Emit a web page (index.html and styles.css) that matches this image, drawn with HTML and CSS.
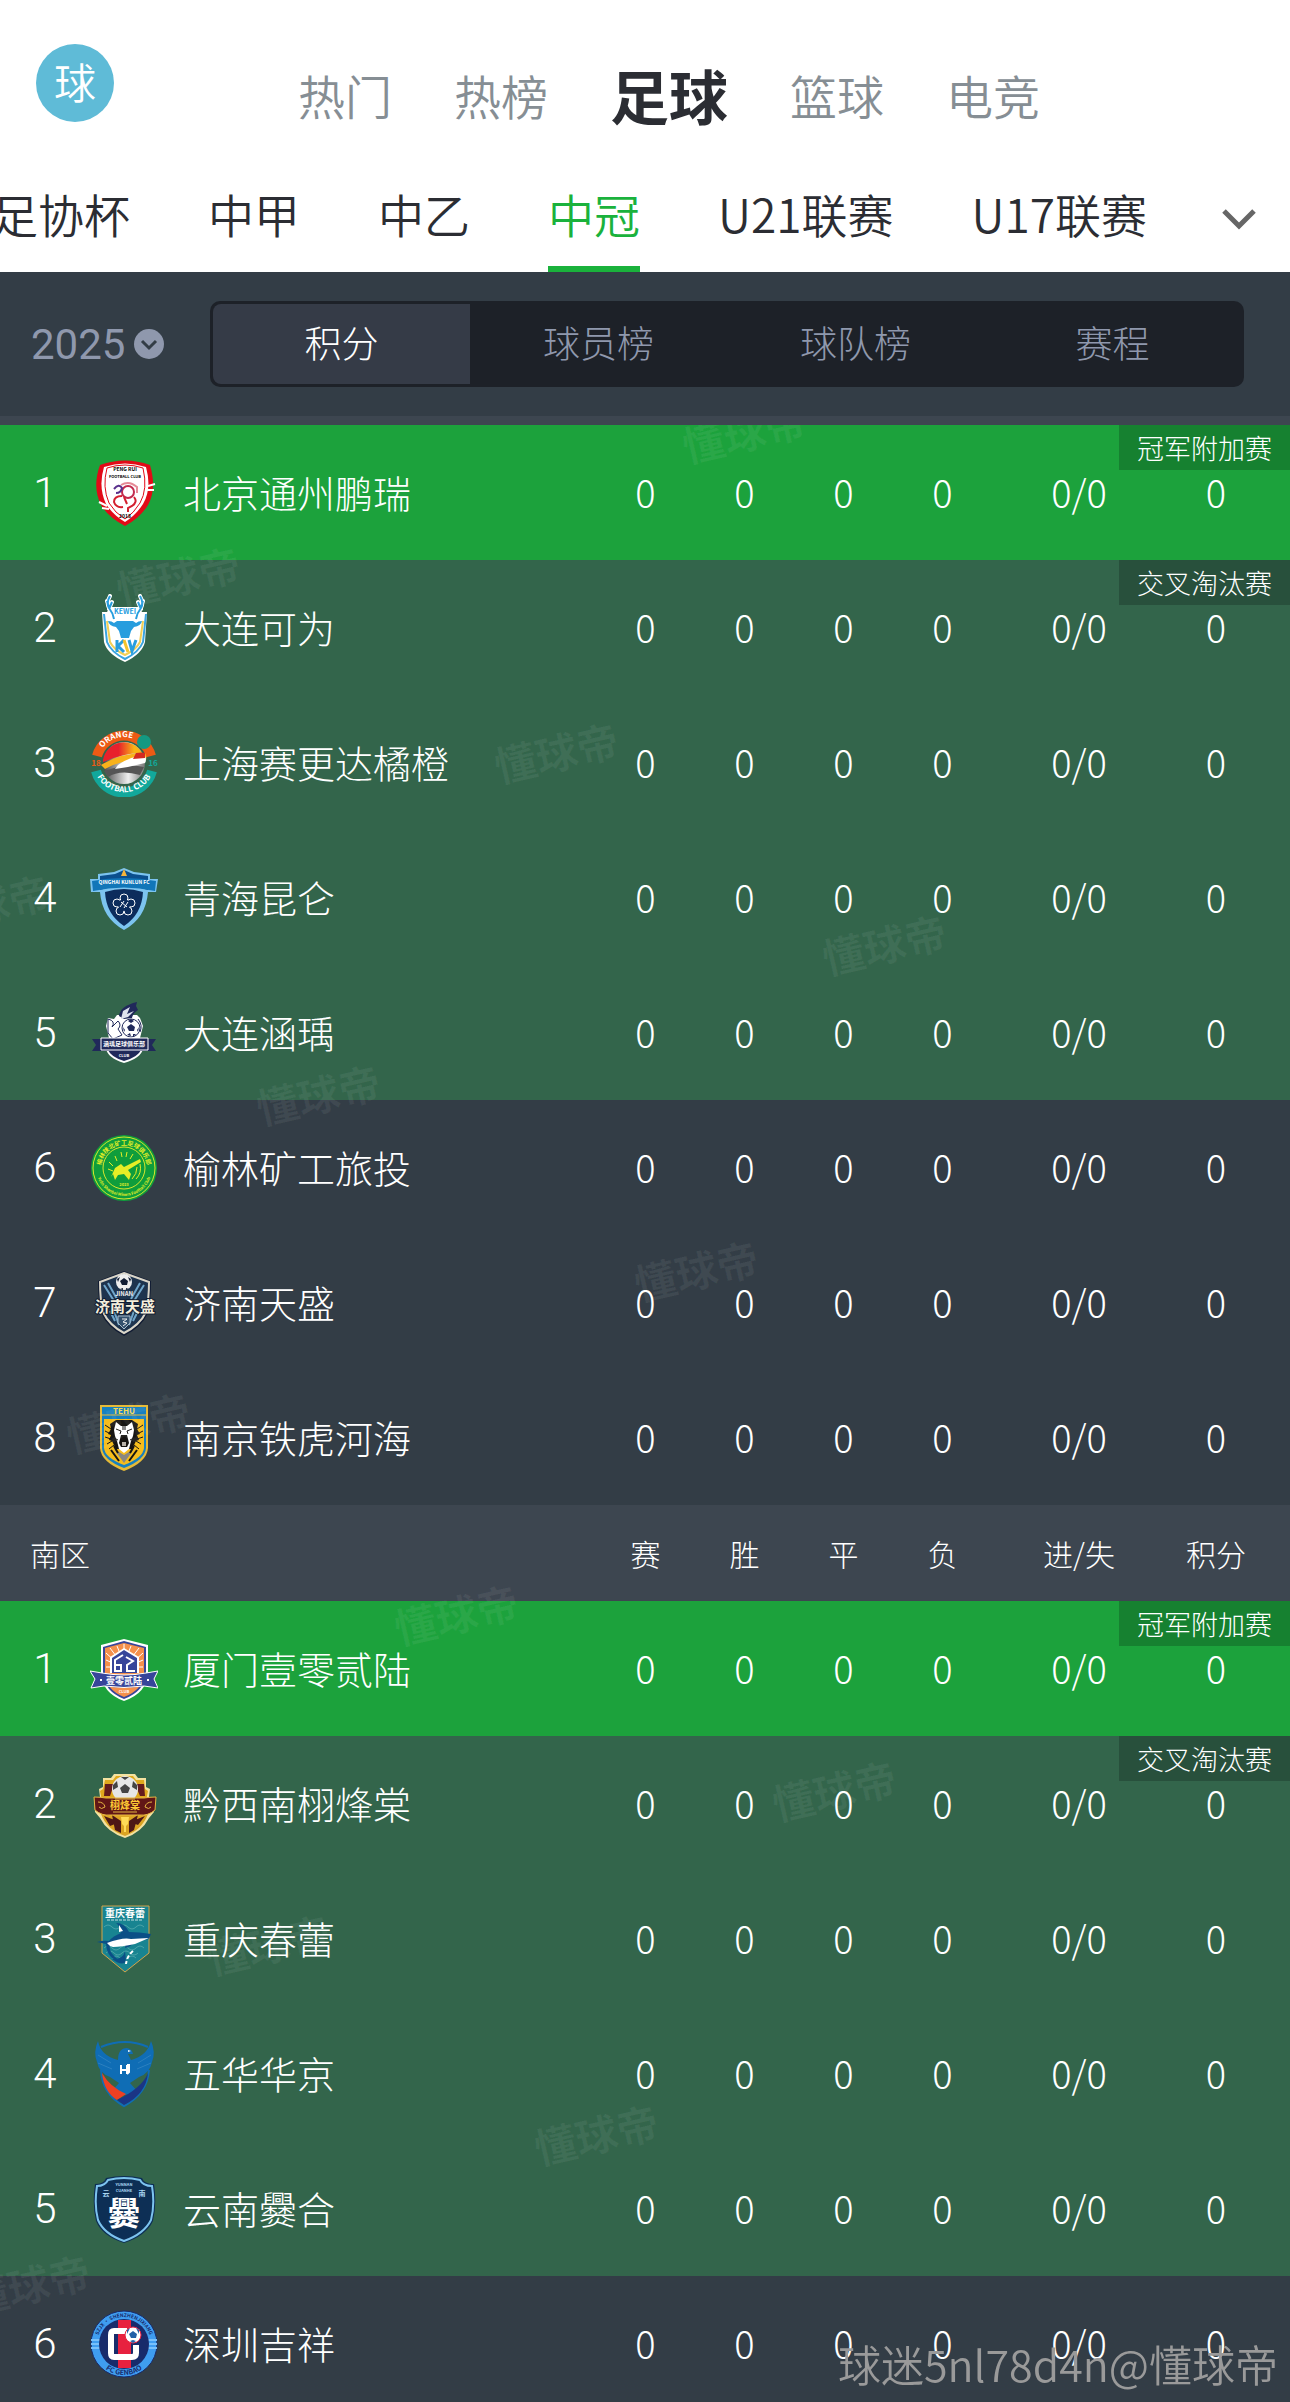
FILE: index.html
```html
<!DOCTYPE html>
<html lang="zh-CN">
<head>
    <meta charset="UTF-8">
    <meta name="viewport" content="width=device-width, initial-scale=1.0">
    <title>中冠积分榜</title>
    <link rel="stylesheet" href="styles.css">
</head>
<body>

<header class="top-bar">
    <a href="#" class="avatar">球</a>
    <nav class="channels">
        <a href="#">热门</a>
        <a href="#">热榜</a>
        <a href="#" class="active">足球</a>
        <a href="#">篮球</a>
        <a href="#">电竞</a>
    </nav>
</header>

<div class="league-bar">
    <nav class="leagues">
        <a href="#">足协杯</a>
        <a href="#">中甲</a>
        <a href="#">中乙</a>
        <a href="#" class="active">中冠</a>
        <a href="#">U21联赛</a>
        <a href="#">U17联赛</a>
    </nav>
    <button class="more" type="button" aria-label="更多">
        <svg width="36" height="24" viewBox="0 0 36 24"><path d="M3 4l15 15L33 4" fill="none" stroke="#666" stroke-width="5"/></svg>
    </button>
</div>

<div class="filter-bar">
    <button class="season" type="button">
        2025
        <svg width="30" height="30" viewBox="0 0 30 30"><circle cx="15" cy="15" r="15" fill="#8f98ad"/><path d="M8 12l7 7 7-7" fill="none" stroke="#333d46" stroke-width="3"/></svg>
    </button>
    <div class="segments">
        <button type="button" class="active">积分</button>
        <button type="button">球员榜</button>
        <button type="button">球队榜</button>
        <button type="button">赛程</button>
    </div>
</div>

<main class="list">
    <table>
        <colgroup>
            <col class="c-rank"><col class="c-crest"><col><col class="c-num"><col class="c-num"><col class="c-num"><col class="c-num"><col class="c-goals"><col class="c-points">
        </colgroup>
        <tbody>
            <tr class="zone-champion">
                <td class="rank">1</td>
                <td class="crest">
                    <svg viewBox="0 0 68 68">
                        <path d="M10 6Q35-3 60 6Q67 30 58 46Q50 59 35 67Q18 58 11 46Q2 28 10 6z" fill="#e20a17"/>
                        <path d="M14 8Q35 1 56 8Q62 30 53 45Q46 56 35 63Q23 56 16 45Q8 28 14 8z" fill="#fff"/>
                        <path d="M17 9Q35 3 53 9Q58 30 50 44Q44 54 35 60Q25 54 19 44Q12 28 17 9z" fill="#fff" stroke="#e20a17" stroke-width="1"/>
                        <path d="M58 27l7-2M57 31l7 0M9 43l8 4M12 49l7 1" stroke="#fff" stroke-width="2"/>
                        <text x="35" y="12" class="t5 heavy">PENG RUI</text>
                        <text x="35" y="19" class="t4 heavy">FOOTBALL CLUB</text>
                        <g fill="none" stroke-width="2">
                            <circle cx="38" cy="33" r="6" stroke="#c22b4e"/>
                            <path d="M32 37q-8 0-8 6 2 6 9 5M34 38l3 7M44 38q4 5-2 9l-4 2v4" stroke="#d31f2e"/>
                            <path d="M24 30q5-6 8-1-1 5-6 5" stroke="#59308c"/>
                            <path d="M31 26q8-5 16 2v6" stroke="#e58a96"/>
                        </g>
                        <text x="35" y="59" class="t5 heavy">2018</text>
                    </svg>
                </td>
                <td class="name">北京通州鹏瑞</td>
                <td>0</td><td>0</td><td>0</td><td>0</td><td>0/0</td>
                <td class="points"><span class="tag">冠军附加赛</span>0</td>
            </tr>
            <tr class="zone-knockout">
                <td class="rank">2</td>
                <td class="crest">
                    <svg viewBox="0 0 68 68">
                        <path d="M12 18h5l3-5h29l3 5h5l-2 30Q52 60 35 68Q17 60 14 48z" fill="#fff"/>
                        <path d="M14 20l3 28Q21 58 35 65Q49 58 53 48l3-28" fill="none" stroke="#3aa4df" stroke-width="2"/>
                        <path d="M17 27l3 21Q24 56 35 61Q46 56 50 48l3-21" fill="none" stroke="#f1cf55" stroke-width="2"/>
                        <path d="M20 2q-4 7-1 12 4 5 5 11M50 2q4 7 1 12-4 5-5 11M17 7l2 6M53 7l-2 6M22 8l-3 7M48 8l3 7" fill="none" stroke="#fff" stroke-width="4" stroke-linecap="round"/>
                        <path d="M20 2q-4 7-1 12 4 5 5 11M50 2q4 7 1 12-4 5-5 11M17 7l2 6M53 7l-2 6M22 8l-3 7M48 8l3 7" fill="none" stroke="#279dde" stroke-width="2"/>
                        <text x="35" y="20" class="t7 heavy" fill="#279dde">KEWEI</text>
                        <path d="M18 27q4 0 6 2l3-2h16l3 2q2-2 6-2-1 5-8 6l-3 4-2 7h-8l-2-7-3-4q-7-1-8-6z" fill="#279dde"/>
                        <path d="M27 46v12M34 46l-6 6 6 6" fill="none" stroke="#279dde" stroke-width="3"/>
                        <path d="M34 46l4 12" stroke="#f2c32e" stroke-width="3"/>
                        <path d="M39 46l3 11 4-11" fill="none" stroke="#279dde" stroke-width="3"/>
                    </svg>
                </td>
                <td class="name">大连可为</td>
                <td>0</td><td>0</td><td>0</td><td>0</td><td>0/0</td>
                <td class="points"><span class="tag">交叉淘汰赛</span>0</td>
            </tr>
            <tr class="zone-knockout">
                <td class="rank">3</td>
                <td class="crest">
                    <svg viewBox="0 0 68 68">
                        <defs>
                            <linearGradient id="sun"><stop offset="0.4" stop-color="#e8202c"/><stop offset="0.8" stop-color="#f9b515"/></linearGradient>
                            <linearGradient id="ball"><stop offset="0" stop-color="#444"/><stop offset="0.6" stop-color="#eee"/><stop offset="1" stop-color="#777"/></linearGradient>
                            <path id="arcTop" d="M9 27A26 26 0 0 1 59 27"/>
                            <path id="arcBottom" d="M4 40A31 31 0 0 0 64 40"/>
                        </defs>
                        <path d="M7 27A28 28 0 0 1 61 27" fill="none" stroke="#ee5a14" stroke-width="10"/>
                        <path d="M6 42A29 29 0 0 0 62 42" fill="none" stroke="#12a89b" stroke-width="10"/>
                        <circle cx="34" cy="34" r="21" fill="url(#ball)"/>
                        <path d="M14 42Q36 34 54 38L50 46Q30 40 18 48z" fill="#555"/>
                        <path d="M13 31A21 21 0 0 1 52 24Q34 24 13 33z" fill="url(#sun)"/>
                        <path d="M11 36Q30 24 55 24q2 3 1 7Q32 30 15 40z" fill="#f8b21b"/>
                        <path d="M28 36Q42 26 55 27q2 4 0 7Q40 38 25 40z" fill="#fff"/>
                        <path d="M46 24q6-1 9 0v5l-12 1z" fill="#d42a20"/>
                        <circle cx="54" cy="13" r="7" fill="#149982"/>
                        <text class="t8 heavy" fill="#fff"><textPath href="#arcTop" startOffset="38%">ORANGE</textPath></text>
                        <text class="t8 heavy" fill="#fff"><textPath href="#arcBottom" startOffset="50%">FOOTBALL CLUB</textPath></text>
                        <text x="6" y="37" class="t8 heavy" fill="#ee5a14">18</text>
                        <text x="63" y="37" class="t8 heavy" fill="#12a89b">16</text>
                    </svg>
                </td>
                <td class="name">上海赛更达橘橙</td>
                <td>0</td><td>0</td><td>0</td><td>0</td><td>0/0</td>
                <td class="points">0</td>
            </tr>
            <tr class="zone-knockout">
                <td class="rank">4</td>
                <td class="crest">
                    <svg viewBox="0 0 68 68">
                        <path d="M8 10L24 8 34 4 44 8 60 10V15L68 15 66 28 58 28Q56 54 34 66Q12 54 10 28L1 28 0 15 8 15z" fill="#7cc4f0"/>
                        <path d="M10 12L25 10 34 6 43 10 58 12V26Q34 18 10 26z" fill="#0b4f8e"/>
                        <path d="M2 17Q34 11 66 17L65 27Q34 20 3 27z" fill="#1176b8"/>
                        <path d="M15 28Q34 22 53 28Q52 50 34 62Q16 50 15 28z" fill="#0c2c5c"/>
                        <path d="M34 5l3 7h-6z" fill="#f6b53c"/>
                        <text x="34" y="20" class="t5 heavy" fill="#fff">QINGHAI KUNLUN FC</text>
                        <g fill="none" stroke="#fff" stroke-width="1">
                            <circle cx="34" cy="34" r="4"/><circle cx="41" cy="39" r="4"/><circle cx="38" cy="47" r="4"/><circle cx="30" cy="47" r="4"/><circle cx="27" cy="39" r="4"/>
                        </g>
                        <circle cx="34" cy="41" r="6" fill="#0c2c5c"/>
                        <path d="M30 43l4-6M34 44l4-6M31 38l6 5" stroke="#fff" stroke-width="1"/>
                    </svg>
                </td>
                <td class="name">青海昆仑</td>
                <td>0</td><td>0</td><td>0</td><td>0</td><td>0/0</td>
                <td class="points">0</td>
            </tr>
            <tr class="zone-knockout">
                <td class="rank">5</td>
                <td class="crest">
                    <svg viewBox="0 0 68 68">
                        <path d="M18 19l6 1 3-4 20 0 3 3 3 8-3 12H19l-3-12z" fill="#fff"/>
                        <path d="M29 17Q30 7 47 3l-1 4 2 4q-5 3-6 8l-8 1z" fill="#20295a"/>
                        <path d="M33 12l7-4-3 7 7-3-6 6-7 2z" fill="#dfe3ee"/>
                        <path d="M18 20q8 2 4 8l6-6q4 4 0 8l4 6-9 4-5-6zM48 20q5 6 2 13M20 40h30" fill="none" stroke="#20295a" stroke-width="1"/>
                        <circle cx="41" cy="29" r="9" fill="#fff" stroke="#20295a"/>
                        <path d="M41 25l4 3-1 4h-5l-2-4zM41 20l3 2-3 2-3-2zM33 28l2 3-1 2zM49 28l-2 3 1 2zM37 36l3-2 1 3zM46 35l-3 0 0 3z" fill="#20295a"/>
                        <path d="M16 50Q18 59 34 64Q51 59 53 50z" fill="#fff"/>
                        <path d="M18 51Q21 58 34 62Q48 58 51 51z" fill="#20295a"/>
                        <path d="M2 40H66l-4 6 4 6H2l4-6z" fill="#20295a"/>
                        <path d="M11 39H58V51H11z" fill="#20295a" stroke="#fff"/>
                        <text x="34" y="47" class="t6 heavy" fill="#fff">涵瑀足球俱乐部</text>
                        <text x="34" y="58" class="t4 heavy" fill="#fff">CLUB</text>
                    </svg>
                </td>
                <td class="name">大连涵瑀</td>
                <td>0</td><td>0</td><td>0</td><td>0</td><td>0/0</td>
                <td class="points">0</td>
            </tr>
            <tr>
                <td class="rank">6</td>
                <td class="crest">
                    <svg viewBox="0 0 68 68">
                        <defs>
                            <path id="ylTop" d="M11 34A23 23 0 0 1 57 34"/>
                            <path id="ylBottom" d="M6 34A28 28 0 0 0 62 34"/>
                        </defs>
                        <circle cx="34" cy="34" r="33" fill="#0f9d3c"/>
                        <circle cx="34" cy="34" r="31" fill="none" stroke="#d6e72e" stroke-width="1"/>
                        <circle cx="34" cy="34" r="21" fill="none" stroke="#d6e72e" stroke-width="1"/>
                        <text class="t6 heavy" fill="#e5ee26"><textPath href="#ylTop" startOffset="50%">榆林陕北矿工足球俱乐部</textPath></text>
                        <text class="t4 heavy" fill="#e5ee26"><textPath href="#ylBottom" startOffset="50%">Yulin Shanbei Miners Football Club</textPath></text>
                        <path d="M21 43l4-9 6-4 3 3 16-8 1 3-13 8 3 4-2 6-5-6-6 1-3 5-2-6z" fill="#e5ee26"/>
                        <path d="M18 35l5 2M19 28l4 4M25 22l2 5M31 18l1 5M37 18l-1 5M43 20l-3 5M47 33q0 7-5 12M50 30q2 9-4 15" fill="none" stroke="#e5ee26" stroke-width="1"/>
                        <text x="34" y="52" class="t4 heavy" fill="#e5ee26">2023</text>
                    </svg>
                </td>
                <td class="name">榆林矿工旅投</td>
                <td>0</td><td>0</td><td>0</td><td>0</td><td>0/0</td>
                <td class="points">0</td>
            </tr>
            <tr>
                <td class="rank">7</td>
                <td class="crest">
                    <svg viewBox="0 0 68 68">
                        <path d="M34 2L61 12Q61 30 58 44Q52 58 34 67Q17 58 11 44Q8 30 8 12z" fill="#111c33"/>
                        <path d="M34 4L59 13Q59 30 56 43Q50 56 34 64Q19 56 13 43Q10 30 10 13z" fill="#1e344e" stroke="#d9d5c8" stroke-width="2"/>
                        <path d="M14 16l10 16M18 14l9 16M54 16L44 32M50 14l-9 16M20 42l5 10M24 42l5 14M48 42l-5 10M44 42l-5 14" stroke="#6fa6cb" stroke-width="2"/>
                        <circle cx="34" cy="13" r="8" fill="#eee"/>
                        <path d="M34 9l4 3-1 4h-5l-2-4zM27 10l3-2-2 5zM41 10l-3-2 2 5zM30 20l3-1 0 2zM39 20l-3-1 0 2z" fill="#111c33"/>
                        <text x="34" y="27" class="t6 heavy" fill="#eee">JINAN</text>
                        <text x="35" y="43" class="t15 heavy outline" fill="#f5efdc">济南天盛</text>
                        <path d="M28 47h12v7l-6 6-6-6z" fill="#34516d" stroke="#a8bccb"/>
                        <path d="M32 50h5l-4 3 4 1-4 3" fill="none" stroke="#eee"/>
                    </svg>
                </td>
                <td class="name">济南天盛</td>
                <td>0</td><td>0</td><td>0</td><td>0</td><td>0/0</td>
                <td class="points">0</td>
            </tr>
            <tr>
                <td class="rank">8</td>
                <td class="crest">
                    <svg viewBox="0 0 68 68">
                        <path d="M10 1H58V44Q57 58 34 67Q11 58 10 44z" fill="#e6ba37"/>
                        <path d="M12 3H56V44Q55 56 34 64Q13 56 12 44z" fill="#1680c0"/>
                        <path d="M12 11H56" stroke="#e6ba37" stroke-width="1"/>
                        <path d="M14 15H54V44Q53 54 34 61Q15 54 14 44z" fill="#f6bd1c"/>
                        <text x="34" y="10" class="t8 heavy" fill="#f8da52">TEHU</text>
                        <path d="M20 20l6-4h16l6 4-1 5 3 5-3 1 2 5-3 1-4 8H26l-4-8-3-1 2-5-3-1 3-5z" fill="#171512"/>
                        <path d="M15 21l6 4M15 27l6 3M15 33l6 2M17 40l5-3M19 45l5-4M53 21l-6 4M53 27l-6 3M53 33l-6 2M51 40l-5-3M49 45l-5-4" stroke="#171512" stroke-width="1"/>
                        <path d="M26 18l5 4h6l5-4 2 8-1 6-2 5-2 8-5 4-5-4-2-8-2-5-1-6z" fill="#fff"/>
                        <path d="M26 25l5 2-1 3M42 25l-5 2 1 3M24 34l4 2M44 34l-4 2M33 22v4M35 22v4" fill="none" stroke="#171512" stroke-width="1"/>
                        <path d="M31 31h6l2 8-2 4h-6l-2-4z" fill="#171512"/>
                        <path d="M32 38h4v4h-4z" fill="#b9b3aa"/>
                        <path d="M24 45l10 14 10-14-5 3-5 3-5-3z" fill="#8a8880"/>
                        <path d="M21 46l8 11M47 46l-8 11M24 42l4 7M44 42l-4 7" stroke="#171512" stroke-width="2"/>
                    </svg>
                </td>
                <td class="name">南京铁虎河海</td>
                <td>0</td><td>0</td><td>0</td><td>0</td><td>0/0</td>
                <td class="points">0</td>
            </tr>
        </tbody>
    </table>

    <table>
        <colgroup>
            <col class="c-rank"><col class="c-crest"><col><col class="c-num"><col class="c-num"><col class="c-num"><col class="c-num"><col class="c-goals"><col class="c-points">
        </colgroup>
        <thead>
            <tr>
                <th class="area" colspan="3">南区</th>
                <th>赛</th><th>胜</th><th>平</th><th>负</th><th>进/失</th><th class="points">积分</th>
            </tr>
        </thead>
        <tbody>
            <tr class="zone-champion">
                <td class="rank">1</td>
                <td class="crest">
                    <svg viewBox="0 0 68 68">
                        <path d="M11 10L34 4 58 10V38Q57 58 34 66Q12 58 11 38z" fill="#fff"/>
                        <path d="M13 12L34 6 56 12V38Q55 56 34 64Q14 56 13 38z" fill="#37459a"/>
                        <path d="M15 13L34 8 54 13V38Q53 55 34 62Q16 55 15 38z" fill="#f4904c"/>
                        <path d="M34 9v12M27 11l4 10M41 11l-4 10M20 13l9 12M49 13l-9 12M16 18l10 9M53 18l-10 9M16 25l9 4M53 25l-9 4M16 32h8M53 32h-8" stroke="#fff" stroke-width="1"/>
                        <path d="M34 13L49 22V38H20V22z" fill="#fff"/>
                        <path d="M34 15L47 23V38H22V23z" fill="#37459a"/>
                        <path d="M33 20l-8 5v11h6v-6h-6M36 22l7 4-6 4v6h8" fill="none" stroke="#fff" stroke-width="2"/>
                        <path d="M0 36L12 38Q34 42 56 38L68 36 64 44 68 53 54 51Q34 54 14 51L1 53 5 44z" fill="#37459a" stroke="#fff" stroke-width="1"/>
                        <text x="34" y="49" class="t9 heavy" fill="#fff">壹零贰陆</text>
                        <path d="M10 45h2M57 45h2" stroke="#fff" stroke-width="2"/>
                        <text x="34" y="58" class="t4 heavy" fill="#fff">CLUB</text>
                    </svg>
                </td>
                <td class="name">厦门壹零贰陆</td>
                <td>0</td><td>0</td><td>0</td><td>0</td><td>0/0</td>
                <td class="points"><span class="tag">冠军附加赛</span>0</td>
            </tr>
            <tr class="zone-knockout">
                <td class="rank">2</td>
                <td class="crest">
                    <svg viewBox="0 0 68 68">
                        <path d="M13 8l8 0 3-4h21l3 4h8v9l4 2-1 8 6 1-1 14-5 6Q52 62 35 68Q17 62 10 48l-5-6-1-14 6-1-1-8 4-2z" fill="#f4e2a0"/>
                        <path d="M15 10h8l3-4h17l3 4h8l1 9 3 2-2 10H12l-2-10 3-2z" fill="#e0a91d"/>
                        <path d="M15 14l9 0-4 12h-6zM54 14l-9 0 5 12h5z" fill="#641c1d"/>
                        <path d="M11 44H58Q52 60 35 66Q17 60 11 44z" fill="#dca423"/>
                        <path d="M14 46l16 6-10 4zM22 45l9 6 0 12-6-3zM39 51l9-6-4 15-5 3zM40 52l15-6-7 9z" fill="#4d1716"/>
                        <circle cx="35" cy="19" r="13" fill="#e6e6e6"/>
                        <path d="M35 14l5 4-2 5h-6l-2-5zM23 15l4-4 1 6-5 3zM47 15l-4-4-1 6 5 3zM31 7h8l-4 3z" fill="#444"/>
                        <path d="M4 27Q10 27 16 28H54Q60 27 66 27L65 40Q58 46 50 45H20Q12 46 5 40z" fill="#611616" stroke="#e5b642" stroke-width="1"/>
                        <text x="35" y="39" class="t10 heavy" fill="#ffca35">栩烽棠</text>
                        <path d="M8 32q6 0 7 5-4 3-6 0M62 32q-6 0-7 5 4 3 6 0M23 42h24M25 29h20" fill="none" stroke="#e5b642" stroke-width="1"/>
                        <path d="M31 47h8l-1 7-2 2v6h-2v-6l-2-2z" fill="#ffdb57"/>
                    </svg>
                </td>
                <td class="name">黔西南栩烽棠</td>
                <td>0</td><td>0</td><td>0</td><td>0</td><td>0/0</td>
                <td class="points"><span class="tag">交叉淘汰赛</span>0</td>
            </tr>
            <tr class="zone-knockout">
                <td class="rank">3</td>
                <td class="crest">
                    <svg viewBox="0 0 68 68">
                        <path d="M12 1H59V48L35 67 12 48z" fill="#188491" stroke="#d4a54a" stroke-width="1"/>
                        <path d="M14 22q4-4 8 0t8 0 8 0 8 0 8 0M14 43q4-4 8 0t8 0 8 0 8 0 8 0M16 48q4-4 8 0t8 0 8 0 8 0M22 53q4-4 8 0t8 0 8 0" fill="none" stroke="#4aa3a8" stroke-width="1"/>
                        <text x="35" y="12" class="t10 heavy" fill="#fff">重庆春蕾</text>
                        <path d="M17 15h36" stroke="#bfe0e2" stroke-width="1" stroke-dasharray="3 1"/>
                        <path d="M7 37q6-2 12-1 4-5 12-8-1-7-5-10 9 0 13 9 10 0 22 2l-2 5-15 3q-3 5-9 6l1-6-15 1q-5 8 9 18-13-2-14-17z" fill="#0b4f86"/>
                        <path d="M17 38q16-6 24-4l18-1-14 6q-14 3-22 3-4-1-6-4zM29 20l4 6-4 1z" fill="#fff"/>
                        <path d="M22 54q11 1 13-8l1 10q-3 6-14-2z" fill="#0b4f86"/>
                        <path d="M43 46q-6 5-7 13" fill="none" stroke="#fff" stroke-width="2" stroke-dasharray="4 2"/>
                    </svg>
                </td>
                <td class="name">重庆春蕾</td>
                <td>0</td><td>0</td><td>0</td><td>0</td><td>0/0</td>
                <td class="points">0</td>
            </tr>
            <tr class="zone-knockout">
                <td class="rank">4</td>
                <td class="crest">
                    <svg viewBox="0 0 68 68">
                        <path d="M11 7Q35-3 58 7" fill="none" stroke="#0f6db5" stroke-width="2"/>
                        <path d="M11 30Q12 54 34 66Q57 54 59 30" fill="none" stroke="#0f6db5" stroke-width="2"/>
                        <path d="M8 1Q11 16 28 20Q28 8 37 8Q42 9 43 14L38 14 41 20Q57 16 61 1Q66 12 62 22Q60 33 49 37L40 43 48 52 35 55 21 52 29 43 20 37Q9 33 7 22Q3 12 8 1z" fill="#0f6db5"/>
                        <path d="M8 15l13 8M8 23l14 6M61 15l-13 8M61 23l-14 6" stroke="#2b80bf" stroke-width="1"/>
                        <path d="M12 33Q20 47 36 54L27 60Q14 52 12 33z" fill="#ee4023"/>
                        <path d="M58 33Q52 48 27 60L34 65Q56 54 58 33z" fill="#1b3585"/>
                        <path d="M38 10l3 1-3 1z" fill="#fff"/>
                        <path d="M31 25v9M37 25v9M31 30h6M37 25h2v7l-2 2" fill="none" stroke="#fff" stroke-width="2"/>
                    </svg>
                </td>
                <td class="name">五华华京</td>
                <td>0</td><td>0</td><td>0</td><td>0</td><td>0/0</td>
                <td class="points">0</td>
            </tr>
            <tr class="zone-knockout">
                <td class="rank">5</td>
                <td class="crest">
                    <svg viewBox="0 0 68 68">
                        <path d="M16 3Q34-1 52 3Q54 9 64 9Q67 30 63 46Q56 61 34 68Q12 61 6 46Q2 30 5 9Q14 9 16 3z" fill="#0d2f55"/>
                        <path d="M18 5Q34 1 50 5Q53 11 62 11Q65 30 61 45Q54 59 34 66Q14 59 8 45Q4 30 7 11Q15 11 18 5z" fill="#0d2f55" stroke="#7cc3ef" stroke-width="2"/>
                        <text x="34" y="11" class="t4 heavy" fill="#a9d6f2">YUNNAN</text>
                        <text x="34" y="17" class="t4 heavy" fill="#a9d6f2">CUANHE</text>
                        <text x="16" y="21" class="t7 heavy" fill="#a9d6f2">云</text>
                        <text x="52" y="21" class="t7 heavy" fill="#a9d6f2">南</text>
                        <text x="34" y="50" class="t32 heavy" fill="#fff">爨</text>
                    </svg>
                </td>
                <td class="name">云南爨合</td>
                <td>0</td><td>0</td><td>0</td><td>0</td><td>0/0</td>
                <td class="points">0</td>
            </tr>
            <tr>
                <td class="rank">6</td>
                <td class="crest">
                    <svg viewBox="0 0 68 68">
                        <defs>
                            <path id="szTop" d="M7 34A27 27 0 0 1 61 34"/>
                            <path id="szBottom" d="M3 34A31 31 0 0 0 65 34"/>
                        </defs>
                        <circle cx="34" cy="34" r="33" fill="#3f9df0" stroke="#182b6b" stroke-width="1"/>
                        <path d="M1 30h9M1 34h9M1 38h9M58 30h9M58 34h9M58 38h9" stroke="#78c0fb" stroke-width="2"/>
                        <circle cx="34" cy="34" r="25" fill="#182b6b"/>
                        <path d="M28 10h13v48H28z" fill="#e7213f"/>
                        <path d="M37 21H24q-3 0-3 4v18q0 4 3 4h18q4 0 4-4v-8" fill="none" stroke="#fff" stroke-width="6"/>
                        <circle cx="43" cy="25" r="8" fill="#fff" stroke="#e7213f" stroke-width="1"/>
                        <path d="M43 21l4 3-1 4h-5l-2-4zM37 20l3-2-3 6zM49 20l-3-2 3 6zM40 31l3-1 3 1-3 2z" fill="#2361a8"/>
                        <text class="t5 heavy" fill="#182b6b"><textPath href="#szTop" startOffset="50%">SZJX · SHENZHENJIXIANG</textPath></text>
                        <text class="t7 heavy" fill="#182b6b"><textPath href="#szBottom" startOffset="50%">FC GENBAO</textPath></text>
                    </svg>
                </td>
                <td class="name">深圳吉祥</td>
                <td>0</td><td>0</td><td>0</td><td>0</td><td>0/0</td>
                <td class="points">0</td>
            </tr>
        </tbody>
    </table>

    <!-- faint brand marks across the list -->
    <svg class="marks" aria-hidden="true">
        <g transform="translate(748 24)"><text transform="rotate(-13)">懂球帝</text></g>
        <g transform="translate(182 168)"><text transform="rotate(-13)">懂球帝</text></g>
        <g transform="translate(560 344)"><text transform="rotate(-13)">懂球帝</text></g>
        <g transform="translate(-8 496)"><text transform="rotate(-13)">懂球帝</text></g>
        <g transform="translate(888 536)"><text transform="rotate(-13)">懂球帝</text></g>
        <g transform="translate(322 686)"><text transform="rotate(-13)">懂球帝</text></g>
        <g transform="translate(700 862)"><text transform="rotate(-13)">懂球帝</text></g>
        <g transform="translate(132 1014)"><text transform="rotate(-13)">懂球帝</text></g>
        <g transform="translate(460 1206)"><text transform="rotate(-13)">懂球帝</text></g>
        <g transform="translate(838 1382)"><text transform="rotate(-13)">懂球帝</text></g>
        <g transform="translate(272 1536)"><text transform="rotate(-13)">懂球帝</text></g>
        <g transform="translate(600 1726)"><text transform="rotate(-13)">懂球帝</text></g>
        <g transform="translate(32 1876)"><text transform="rotate(-13)">懂球帝</text></g>
    </svg>
</main>

<div class="signature">球迷5nl78d4n@懂球帝</div>

</body>
</html>
```
FILE: styles.css
```css
* {
    box-sizing: border-box;
}
body {
    font-family: "Noto Sans CJK SC", sans-serif;
    font-weight: 300;
    background-color: #333d46;
    color: #ffffff;
    margin: 0;
    height: 100vh;
    overflow: hidden;
    display: flex;
    flex-direction: column;
}
a {
    color: inherit;
    text-decoration: none;
}
button {
    font: inherit;
    color: inherit;
    background: none;
    border: none;
    padding: 0;
    cursor: pointer;
}
/* Top channels */
.top-bar {
    flex: none;
    display: flex;
    align-items: center;
    height: 166px;
    padding: 0 66px 0 36px;
    background-color: #ffffff;
}
.avatar {
    width: 78px;
    height: 78px;
    border-radius: 50%;
    background-color: #5fbbd7;
    color: #ffffff;
    font-size: 42px;
    font-weight: 350;
    line-height: 74px;
    text-align: center;
}
.channels {
    flex: 1;
    display: flex;
    justify-content: center;
    align-items: center;
    gap: 62px;
    padding-top: 24px;
    font-size: 47px;
    font-weight: 350;
    line-height: 68px;
    color: #868e94;
}
.channels .active {
    font-size: 59px;
    font-weight: 700;
    color: #2b2d33;
}
/* Leagues */
.league-bar {
    flex: none;
    display: flex;
    justify-content: space-between;
    height: 106px;
    padding-right: 33px;
    background-color: #ffffff;
    color: #2b2d33;
}
.leagues {
    display: flex;
    gap: 78px;
    margin-left: -8px;
    font-size: 46px;
    font-weight: 350;
    line-height: 94px;
    white-space: nowrap;
}
.leagues .active {
    color: #1ab23c;
    border-bottom: 6px solid #1ab23c;
}
.more {
    display: flex;
    align-items: center;
}
/* Season and table type */
.filter-bar {
    flex: none;
    display: flex;
    align-items: center;
    height: 144px;
    padding: 0 46px 0 31px;
}
.season {
    display: flex;
    align-items: center;
    gap: 9px;
    width: 179px;
    font-family: Roboto, sans-serif;
    font-size: 42px;
    font-weight: 400;
    color: #8f98ad;
}
.segments {
    flex: 1;
    display: flex;
    height: 86px;
    padding: 3px;
    border-radius: 10px;
    background-color: #1d2128;
    overflow: hidden;
}
.segments button {
    flex: 1;
    font-size: 37px;
    line-height: 76px;
    padding-bottom: 4px;
    color: #8f98ad;
}
.segments .active {
    border-radius: 8px 0 0 8px;
    background-color: #353b47;
    color: #ffffff;
}
/* Standings */
.list {
    flex: 1;
    min-height: 0;
    position: relative;
    overflow: hidden;
    border-top: 9px solid #3d4650;
}
table {
    width: 100%;
    table-layout: fixed;
    border-collapse: collapse;
}
.c-rank {
    width: 90px;
}
.c-crest {
    width: 68px;
}
.c-num {
    width: 99px;
}
.c-goals {
    width: 174px;
}
.c-points {
    width: 124px;
}
td, th {
    padding: 0;
    text-align: center;
    font-weight: 300;
}
td {
    height: 135px;
    padding-bottom: 2px;
    font-size: 38px;
}
th {
    height: 96px;
    font-size: 30px;
    background-color: #3d4650;
}
.area {
    padding-left: 30px;
    text-align: left;
}
.rank {
    padding-bottom: 0;
    font-family: Roboto, sans-serif;
    font-size: 42px;
}
.crest {
    padding-bottom: 0;
}
.crest svg {
    display: block;
    width: 68px;
    height: 68px;
}
.name {
    padding-left: 25px;
    text-align: left;
    white-space: nowrap;
}
.points {
    position: relative;
    padding-right: 24px;
}
.tag {
    position: absolute;
    top: 0;
    right: 0;
    padding: 0 18px;
    font-size: 27px;
    line-height: 45px;
    white-space: nowrap;
    background-color: rgba(0, 0, 0, 0.2);
}
.zone-champion {
    background-color: #1ca23c;
}
.zone-knockout {
    background-color: #33654b;
}
/* Crest lettering */
.crest text {
    text-anchor: middle;
}
.heavy {
    font-weight: 700;
}
.t4 {
    font-size: 4px;
}
.t5 {
    font-size: 5px;
}
.t6 {
    font-size: 6px;
}
.t7 {
    font-size: 7px;
}
.t8 {
    font-size: 8px;
}
.t9 {
    font-size: 9px;
}
.t10 {
    font-size: 10px;
}
.t15 {
    font-size: 15px;
}
.t32 {
    font-size: 32px;
}
.outline {
    stroke: #111c33;
    stroke-width: 2px;
    paint-order: stroke;
}
/* Marks over the list */
.marks {
    position: absolute;
    top: 0;
    left: 0;
    width: 100%;
    height: 100%;
    fill: rgba(255, 255, 255, 0.06);
    font-size: 42px;
    font-weight: 700;
    text-anchor: middle;
    pointer-events: none;
}
.signature {
    position: fixed;
    right: 12px;
    bottom: 8px;
    font-size: 43px;
    font-weight: 350;
    color: #9a9a9a;
}
```
